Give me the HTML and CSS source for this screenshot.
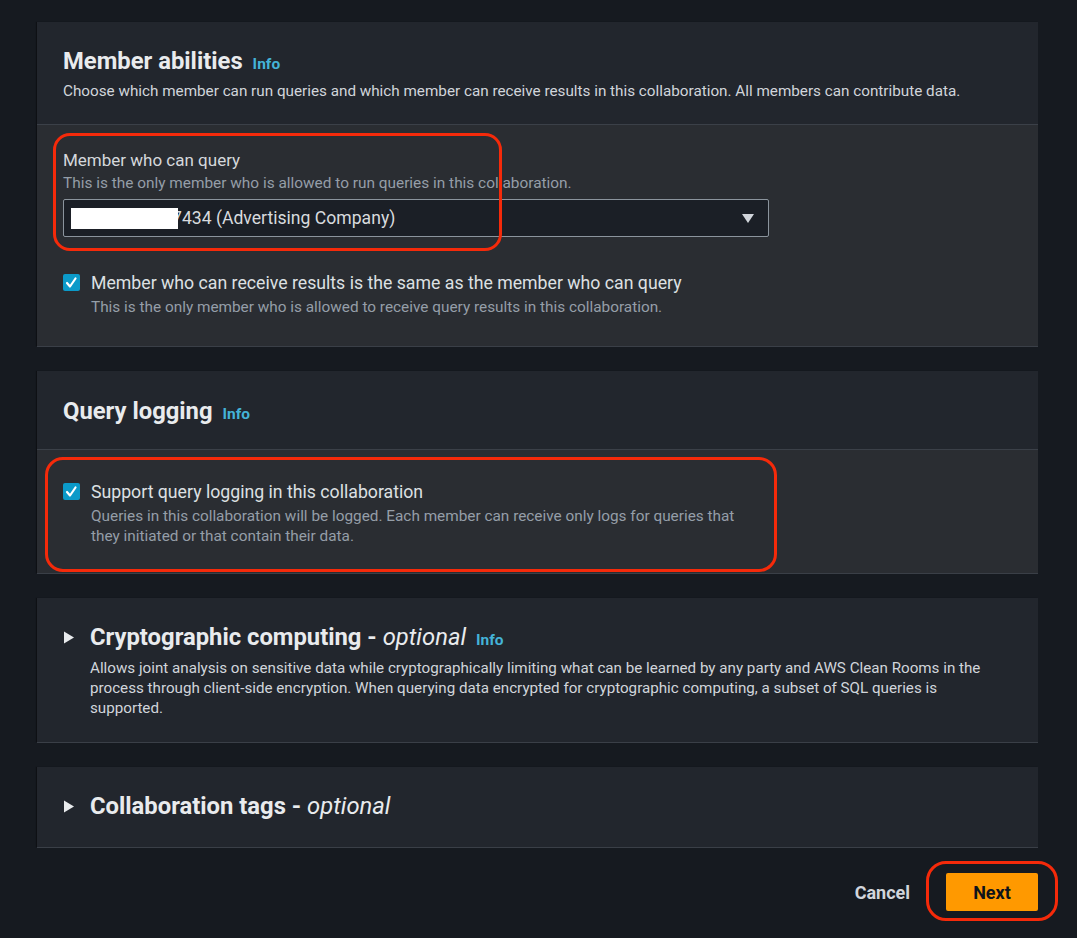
FILE: index.html
```html
<!DOCTYPE html>
<html lang="en">
<head>
<meta charset="utf-8">
<title>Create collaboration</title>
<link rel="stylesheet" href="styles.css">
</head>
<body>
<main class="page">

  <section class="card">
    <header class="card-header with-sep">
      <h2 class="card-title">Member abilities<a class="info" href="#">Info</a></h2>
      <p class="card-desc">Choose which member can run queries and which member can receive results in this collaboration. All members can contribute data.</p>
    </header>
    <div class="card-body body-abilities">
      <div class="field">
        <div class="field-label">Member who can query</div>
        <div class="field-desc">This is the only member who is allowed to run queries in this collaboration.</div>
        <div class="select">
          <span class="select-value"><span class="redact"></span>7434 (Advertising Company)</span>
          <svg class="caret" width="12" height="9" viewBox="0 0 12 9"><polygon points="0,0 12,0 6,9"/></svg>
        </div>
      </div>
      <div class="check-row row-results">
        <span class="checkbox"><svg width="17" height="17" viewBox="0 0 17 17"><rect x="0" y="0" width="17" height="17" rx="2"/><polyline points="4,9 7,12.5 12.5,4.5"/></svg></span>
        <div class="check-text">
          <div class="check-label">Member who can receive results is the same as the member who can query</div>
          <div class="check-desc">This is the only member who is allowed to receive query results in this collaboration.</div>
        </div>
      </div>
      <div class="annot annot-query"></div>
    </div>
  </section>

  <section class="card">
    <header class="card-header header-logging with-sep">
      <h2 class="card-title">Query logging<a class="info" href="#">Info</a></h2>
    </header>
    <div class="card-body body-logging">
      <div class="check-row">
        <span class="checkbox"><svg width="17" height="17" viewBox="0 0 17 17"><rect x="0" y="0" width="17" height="17" rx="2"/><polyline points="4,9 7,12.5 12.5,4.5"/></svg></span>
        <div class="check-text">
          <div class="check-label">Support query logging in this collaboration</div>
          <div class="check-desc">Queries in this collaboration will be logged. Each member can receive only logs for queries that they initiated or that contain their data.</div>
        </div>
      </div>
      <div class="annot annot-logging"></div>
    </div>
  </section>

  <section class="card">
    <header class="card-header header-expand">
      <h2 class="card-title expand-title"><svg class="expand-icon" width="12" height="13" viewBox="0 0 12 13"><polygon points="1,0.5 11,6.5 1,12.5"/></svg><span>Cryptographic computing - <em class="optional">optional</em></span><a class="info" href="#">Info</a></h2>
      <p class="card-desc expand-desc">Allows joint analysis on sensitive data while cryptographically limiting what can be learned by any party and AWS Clean Rooms in the process through client-side encryption. When querying data encrypted for cryptographic computing, a subset of SQL queries is supported.</p>
    </header>
  </section>

  <section class="card">
    <header class="card-header header-expand header-tags">
      <h2 class="card-title expand-title"><svg class="expand-icon" width="12" height="13" viewBox="0 0 12 13"><polygon points="1,0.5 11,6.5 1,12.5"/></svg><span>Collaboration tags - <em class="optional">optional</em></span></h2>
    </header>
  </section>

  <footer class="actions">
    <button class="btn-link" type="button">Cancel</button>
    <span class="next-wrap">
      <button class="btn-primary" type="button">Next</button>
      <span class="annot annot-next"></span>
    </span>
  </footer>

</main>
</body>
</html>
```

FILE: styles.css
```css
* { box-sizing: border-box; }

body {
  margin: 0;
  background: #161a20;
  font-family: Roboto, "Liberation Sans", Arial, sans-serif;
  color: #d1d5db;
}

.page {
  width: 1001px;
  margin-left: 37px;
  padding-top: 22px;
  padding-bottom: 30px;
}

.card {
  background: #22262d;
  margin-bottom: 25px;
  box-shadow: 0 1px 0 #3a3f47, -1px 0 1px rgba(0, 0, 0, 0.35);
}

.card-header {
  padding: 25px 26px 23px;
}

.card-header.with-sep {
  border-bottom: 1px solid #3b4048;
}

.card-title {
  margin: 0;
  height: 28px;
  font-size: 23.8px;
  line-height: 28px;
  font-weight: 700;
  color: #e9ebed;
}

.info {
  margin-left: 10px;
  font-size: 15.5px;
  line-height: 1;
  font-weight: 700;
  color: #44b3d7;
  text-decoration: none;
}

.card-desc {
  margin: 6px 0 0;
  font-size: 15.25px;
  line-height: 20px;
  color: #d1d5db;
}

.card-body {
  position: relative;
  background: #2a2d32;
}

.body-abilities {
  padding: 24px 26px 29px;
}

.field-label {
  font-size: 17px;
  line-height: 22px;
  color: #d5d8dc;
}

.field-desc {
  margin-top: 3px;
  font-size: 15.4px;
  line-height: 18px;
  color: #959ea8;
}

.select {
  margin-top: 7px;
  width: 706px;
  height: 38px;
  border: 1px solid #8b949d;
  border-radius: 2px;
  background: #1b1f26;
  display: flex;
  align-items: center;
  justify-content: space-between;
  padding: 0 14px 0 7px;
}

.select-value {
  font-size: 17.6px;
  line-height: 22px;
  color: #d8dbde;
}

.redact {
  display: inline-block;
  position: relative;
  z-index: 1;
  width: 107px;
  height: 21px;
  background: #ffffff;
  vertical-align: -5px;
  margin-right: -6px;
}

.caret {
  fill: #d1d5db;
}

.check-row {
  display: flex;
  gap: 11px;
  align-items: flex-start;
}

.row-results {
  margin-top: 35px;
}

.checkbox {
  flex: none;
  width: 17px;
  height: 17px;
  margin-top: 2px;
}

.checkbox svg {
  display: block;
}

.checkbox rect {
  fill: #0b9ac9;
}

.checkbox polyline {
  fill: none;
  stroke: #ffffff;
  stroke-width: 2.2;
  stroke-linecap: round;
  stroke-linejoin: round;
}

.check-label {
  font-size: 17.7px;
  line-height: 22px;
  color: #dde0e3;
}

.check-desc {
  margin-top: 3px;
  font-size: 15.35px;
  line-height: 20px;
  color: #959ea8;
  max-width: 656px;
}

.header-logging {
  padding: 26px 26px 24px;
}

.body-logging {
  padding: 31px 26px 27px;
}

.header-expand {
  padding: 25px 26px 25px;
}

.header-tags {
  padding-bottom: 27px;
}

.expand-title {
  display: flex;
  align-items: baseline;
}

.expand-icon {
  flex: none;
  fill: #e9ebed;
  margin-right: 15px;
  align-self: center;
}

.optional {
  font-weight: 400;
  font-style: italic;
}

.expand-desc {
  margin: 7px 0 -1px 27px;
  font-size: 15.18px;
}

.annot {
  position: absolute;
  border: 3px solid #f52a0a;
  pointer-events: none;
}

.annot-query {
  top: 8px;
  left: 16px;
  width: 449px;
  height: 118px;
  border-radius: 17px;
}

.annot-logging {
  top: 7px;
  left: 8px;
  width: 732px;
  height: 115px;
  border-radius: 18px;
}

.actions {
  display: flex;
  justify-content: flex-end;
  align-items: center;
  padding-top: 1px;
}

.btn-link {
  background: none;
  border: 0;
  padding: 0;
  margin-right: 36px;
  font-family: inherit;
  font-size: 18px;
  font-weight: 700;
  color: #d1d5db;
}

.next-wrap {
  position: relative;
  display: flex;
}

.btn-primary {
  width: 92px;
  height: 38px;
  border: 0;
  border-radius: 2px;
  background: #ff9900;
  color: #0f141a;
  font-family: inherit;
  font-size: 18px;
  font-weight: 700;
  padding: 0;
}

.annot-next {
  top: -12px;
  left: -20px;
  right: -20px;
  bottom: -10px;
  border-radius: 20px;
}
```
